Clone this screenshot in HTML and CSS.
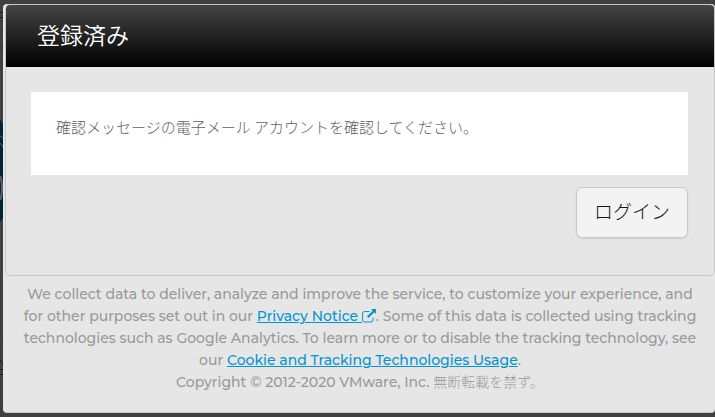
FILE: index.html
```html
<!DOCTYPE html>
<html lang="ja">
<head>
  <meta charset="UTF-8" />
  <title>登録済み</title>
  <link rel="stylesheet" href="styles.css">
</head>
<body>

  <svg class="backdrop" width="3" height="417" viewBox="0 0 3 417" aria-hidden="true">
    <path d="M0 120 Q3 122 3 125 V218 L0 222Z" fill="#002538" />
    <path d="M0 136 L3 138 M0 143 L3 147" stroke="#56666e" />
    <path d="M0 176 Q2 180 2 188 T0 200" fill="none" stroke="#626262" stroke-width="2" />
    <path d="M0 12.500H3 M0 17.500H3 M0 369.500H3 M0 374.500H3" stroke="#1c1c1c" />
    <path d="M0 46.500H3 M0 338.500H3 M0 402.500H3" stroke="#333" />
    <path d="M0 360 L3 364" stroke="#1c1c1c" />
  </svg>

  <div class="modal">
    <main class="card">
      <h1>登録済み</h1>
      <div class="content">
        <p class="message">確認メッセージの電子メール アカウントを確認してください。</p>
        <button type="button">ログイン</button>
      </div>
    </main>

    <footer>
      <p>We collect data to deliver, analyze and improve the service, to customize your experience, and for other purposes set out in our
        <a href="#privacy">Privacy Notice <svg class="external" viewBox="0 0 14 14" aria-hidden="true"><path d="M7.500 2.500H2.500Q.6 2.500 .6 4.500V11Q.6 13 2.500 13H9Q11 13 11 11V8.500" fill="none" stroke="currentColor" /><path d="M9 0H14V5L12.300 3.300L6.500 9.100L4.900 7.500L10.700 1.700Z" fill="currentColor" /></svg></a>. Some of this data is collected using tracking technologies such as Google Analytics. To learn more or to disable the tracking technology, see our
        <a href="#cookies">Cookie and Tracking Technologies Usage</a>.</p>
      <p>Copyright © 2012-2020 VMware, Inc. <span class="rights">無断転載を禁ず。</span></p>
    </footer>
  </div>

</body>
</html>
```
FILE: styles.css
```css
* {
  box-sizing: border-box;
}
body {
  font-family: Montserrat, Inter, "Noto Sans CJK JP", sans-serif;
  background-color: #404040;
  margin: 0;
  padding: 4px 0 4px 3px;
}
.backdrop {
  position: absolute;
  left: 0;
  top: 0;
}
.modal {
  background-color: #e6e6e6;
  border-bottom: 1px solid #c8c8c8;
  border-radius: 4px;
  padding: 0 0 19px 2px;
}
.card {
  border: 1px solid #c8c8c8;
  border-radius: 5px;
  overflow: hidden;
}
h1 {
  font-family: "Noto Sans CJK JP", sans-serif;
  font-size: 23px;
  font-weight: 350;
  line-height: 58px;
  color: white;
  background: linear-gradient(#444, #000);
  margin: 0;
  padding: 0 31px 4px;
}
.content {
  display: flex;
  flex-direction: column;
  align-items: flex-end;
  gap: 12px;
  padding: 25px 26px 37px 25px;
}
.message {
  align-self: stretch;
  font-family: "Noto Sans CJK JP", sans-serif;
  font-size: 15px;
  font-weight: 300;
  line-height: 22px;
  color: #606064;
  background-color: white;
  margin: 0;
  padding: 24px 25px 37px;
}
button {
  font-family: "Noto Sans CJK JP", sans-serif;
  font-size: 19px;
  font-weight: 300;
  line-height: 27px;
  color: #001b22;
  background-color: #f3f3f3;
  border: 1px solid #c8c8c8;
  border-radius: 6px;
  padding: 9px 17px 13px;
  box-shadow: 0 1px 2px rgba(0,0,0,0.1);
  cursor: pointer;
}
footer {
  font-size: 14px;
  font-weight: 500;
  line-height: 22px;
  text-align: center;
  color: #999;
  padding: 7px 12px 0;
}
footer p {
  margin: 0;
}
footer a {
  color: #0095d3;
}
.external {
  width: 14px;
  height: 14px;
  vertical-align: -2px;
}
.rights {
  font-family: "Noto Sans CJK JP", sans-serif;
  font-weight: 300;
  line-height: 1;
}
```
